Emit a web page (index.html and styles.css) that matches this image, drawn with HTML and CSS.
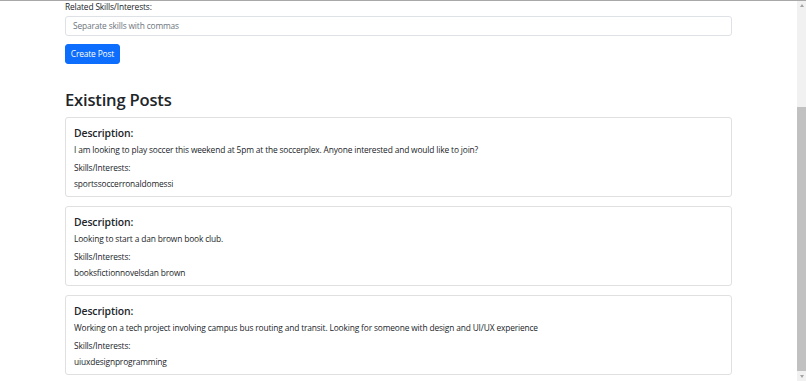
FILE: index.html
```html
<!DOCTYPE html>
<html lang="en">
<head>
<meta charset="utf-8">
<title>Posts</title>
<link rel="stylesheet" href="styles.css">
</head>
<body>
<div class="frame">
  <main class="page">
    <div class="container">
      <label class="form-label">Related Skills/Interests:</label>
      <div class="form-control placeholder">Separate skills with commas</div>
      <button class="btn">Create Post</button>

      <h2 class="title">Existing Posts</h2>

      <div class="posts">
        <div class="card">
          <h5 class="card-title">Description:</h5>
          <p class="card-text">I am looking to play soccer this weekend at 5pm at the soccerplex. Anyone interested and would like to join?</p>
          <p class="skills-label">Skills/Interests:</p>
          <p class="skills">sportssoccerronaldomessi</p>
        </div>
        <div class="card">
          <h5 class="card-title">Description:</h5>
          <p class="card-text">Looking to start a dan brown book club.</p>
          <p class="skills-label">Skills/Interests:</p>
          <p class="skills">booksfictionnovelsdan brown</p>
        </div>
        <div class="card">
          <h5 class="card-title">Description:</h5>
          <p class="card-text">Working on a tech project involving campus bus routing and transit. Looking for someone with design and UI/UX experience</p>
          <p class="skills-label">Skills/Interests:</p>
          <p class="skills">uiuxdesignprogramming</p>
        </div>
      </div>
    </div>
  </main>
  <aside class="scrollbar">
    <div class="arrow up"></div>
    <div class="track"><div class="thumb"></div></div>
    <div class="arrow down"></div>
  </aside>
</div>
</body>
</html>
```

FILE: styles.css
```css
html, body {
  margin: 0;
  padding: 0;
  height: 100%;
  overflow: hidden;
  background: #fff;
}
body {
  font-family: "Open Sans", "Noto Sans", sans-serif;
  color: #212529;
  font-size: 8.4px;
  letter-spacing: -0.15px;
  line-height: 12.75px;
}
.frame {
  display: flex;
  height: 381px;
  border-top: 1px solid #a8a8a8;
  box-sizing: border-box;
}
.page {
  flex: 1;
  min-width: 0;
}
.container {
  width: 667px;
  margin: 0 auto;
  display: flex;
  flex-direction: column;
  align-items: flex-start;
}
.form-label {
  display: block;
  margin-top: 0;
  margin-bottom: 2px;
}
.form-control {
  align-self: stretch;
  height: 20px;
  box-sizing: border-box;
  border: 1px solid #dee2e6;
  border-radius: 3px;
  padding: 1px 7px 0 7px;
  display: flex;
  align-items: center;
}
.placeholder {
  color: #6c757d;
}
.btn {
  margin-top: 8px;
  height: 20px;
  width: 55px;
  padding: 0;
  border: 1px solid #0d6efd;
  background: #0d6efd;
  color: #fff;
  border-radius: 3px;
  font-family: inherit;
  font-size: 8.4px;
  letter-spacing: -0.15px;
  line-height: 1;
}
.title {
  margin: 26px 0 0 0;
  font-size: 16.6px;
  font-weight: 600;
  letter-spacing: -0.2px;
  line-height: 20px;
}
.posts {
  align-self: stretch;
  display: flex;
  flex-direction: column;
  gap: 9px;
  margin-top: 7px;
}
.card {
  height: 80px;
  box-sizing: border-box;
  border: 1px solid #e0e0e0;
  border-radius: 3px;
  padding: 9px 8px 0 8px;
}
.card-title {
  margin: 0 0 4px 0;
  font-size: 10.4px;
  font-weight: 600;
  letter-spacing: -0.1px;
  line-height: 13px;
}
.card-text {
  margin: 0 0 5.5px 0;
}
.skills-label {
  margin: 0 0 3.5px 0;
}
.skills {
  margin: 0;
}
.scrollbar {
  width: 9px;
  background: #f1f1f1;
  display: flex;
  flex-direction: column;
}
.arrow {
  height: 9px;
  display: flex;
  align-items: center;
  justify-content: center;
}
.arrow::before {
  content: "";
  width: 0;
  height: 0;
  border-left: 2.5px solid transparent;
  border-right: 2.5px solid transparent;
}
.arrow.up::before {
  border-bottom: 3px solid #a3a3a3;
}
.arrow.down::before {
  border-top: 3px solid #a3a3a3;
}
.track {
  flex: 1;
  padding-top: 97px;
  padding-bottom: 1px;
  display: flex;
}
.thumb {
  flex: 1;
  background: #c1c1c1;
}
```
